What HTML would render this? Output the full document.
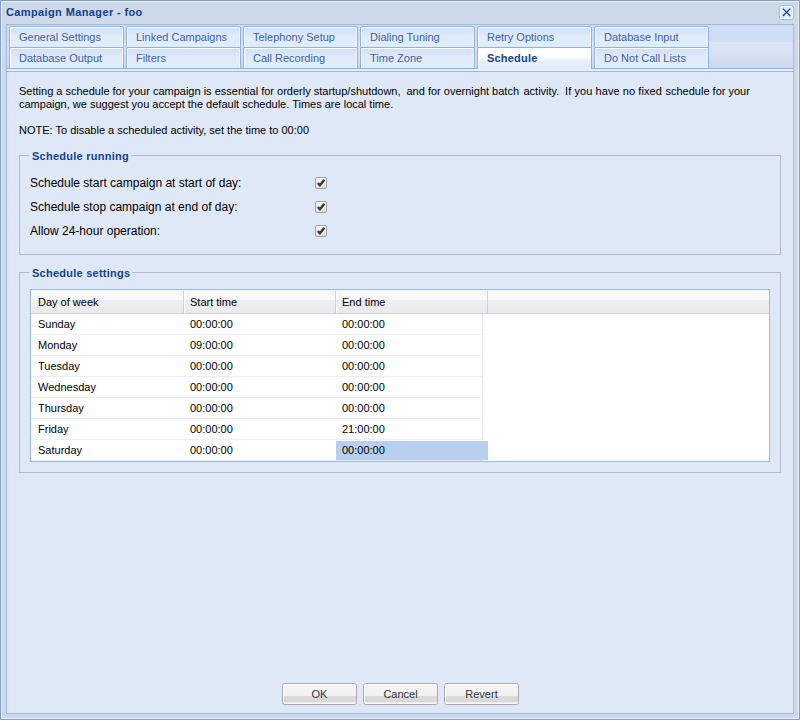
<!DOCTYPE html>
<html><head><meta charset="utf-8">
<style>
*{box-sizing:border-box;margin:0;padding:0}
html,body{width:800px;height:720px;overflow:hidden}
body{position:relative;background:#cdd9e8;font-family:"Liberation Sans",sans-serif;font-size:11px;color:#000}
.a{position:absolute}
.t{position:absolute;white-space:nowrap;line-height:13px;height:13px}
/* frame lines */
#fo{left:0;top:0;width:800px;height:720px;border:1px solid #86a0c4}
#fi{left:1px;top:1px;width:798px;height:718px;border:1px solid #e9eef6;border-right-color:#e9eef6}
#title{left:6px;top:6px;font-weight:bold;color:#15428b;letter-spacing:0.38px}
#close{left:779px;top:5px;width:15px;height:15px;border:1px solid #9ebde6;border-radius:3px;background:#fff}
#close i{position:absolute;left:1px;top:1px;width:11px;height:11px;background:#dcecfc;border-radius:1px}
#strip{left:6px;top:24px;width:788px;height:48px;border:1px solid #99bbe8;border-bottom:none;background:#cddef5}
#strip2{left:7px;top:42px;width:786px;height:26px;background:linear-gradient(#dfe7f5,#cbd9ef)}
#sline{left:7px;top:68px;width:786px;height:1px;background:#8db2e3}
#spacer{left:7px;top:69px;width:786px;height:2px;background:#e6effb}
#sline2{left:6px;top:71px;width:788px;height:1px;background:#99bbe8}
#body{left:6px;top:72px;width:788px;height:642px;border:1px solid #99bbe8;border-top:none;background:#dfe8f6}
.tab{position:absolute;width:115px;height:22px;border:1px solid #8db2e3;border-radius:2px 2px 0 0;background:linear-gradient(#cfdff6 0px,#e1ecfb 10px,#e1ecfb 100%);box-shadow:inset 1px 1px 0 #fff, inset -1px 0 0 #f4f8fe}
.tab span{position:absolute;left:9px;top:4px;line-height:13px;color:#3d629e;white-space:nowrap}
.tab.act{height:22px;border-bottom:none;background:linear-gradient(#fff 0px,#fdfeff 9px,#e8effa 13px,#e3ebf8 100%);box-shadow:inset 1px 1px 0 #fff}
.tab.act span{color:#15428b;font-weight:bold;letter-spacing:0.2px}
.p{left:19px;color:#000}
fieldset{position:absolute;border:1px solid #b5b8c8}
.lg{position:absolute;font-weight:bold;color:#15428b;background:#dfe8f6;padding:0 2px 0 3px;line-height:13px;white-space:nowrap;letter-spacing:0.25px}
.lbl{position:absolute;left:30px;font-size:12px;line-height:14px;white-space:nowrap}
.cb{position:absolute;left:315px;width:12px;height:12px;border:1px solid #a3a3a3;border-radius:2px;background:linear-gradient(#f4f4f4,#dedede)}
.cb svg{position:absolute;left:0;top:0}
#grid{left:30px;top:289px;width:740px;height:173px;border:1px solid #99bbe8;background:#fff}
#hd{left:0;top:0;width:738px;height:24px;box-shadow:inset 1px 0 0 #fbfbfb;background:linear-gradient(#f9f9f9 0,#f8f8f8 10px,#efeff1 10px,#e9eaec 23px);border-bottom:1px solid #d0d0d0}
.hsep{position:absolute;top:1px;width:1px;height:23px;background:#d0d0d0}
.hsep2{position:absolute;top:1px;width:1px;height:23px;background:#fff}
.hdt{position:absolute;top:6px;line-height:13px;white-space:nowrap;color:#000}
.row{position:absolute;left:0;width:452px;height:21px;border:1px solid #ededed;border-top-color:#fff;border-left:none}
.c{position:absolute;line-height:13px;white-space:nowrap;color:#000}
#sel{left:305px;top:151px;width:152px;height:19px;background:#b8cfee}
.btn{position:absolute;top:683px;width:75px;height:22px;border:1px solid #ababab;border-radius:2.5px;background:linear-gradient(#f5f5f5 0,#f1f1f1 60%,#dadada 60%,#d8d8d8 92%,#ececec 92%);box-shadow:inset 1px 1px 0 #fff,inset 0 -1px 0 #f8f8f8}
.btn span{position:absolute;left:0;right:0;top:4px;text-align:center;line-height:13px;color:#333}
</style></head>
<body>
<div id="fo" class="a"></div>
<div id="fi" class="a"></div>
<div id="title" class="t">Campaign Manager - foo</div>
<div id="close" class="a"><i></i>
<svg class="a" style="left:1px;top:1px" width="11" height="11" viewBox="0 0 11 11"><path d="M1.9 1.6L9.3 9.0M9.3 1.6L1.9 9.0" stroke="#1d3f88" stroke-width="1.3"/></svg>
</div>

<div id="strip" class="a"></div>
<div id="strip2" class="a"></div>
<div id="sline" class="a"></div>
<div id="spacer" class="a"></div>
<div id="sline2" class="a"></div>
<div id="body" class="a"></div>

<!-- tabs row 1 -->
<div class="tab" style="left:9px;top:26px"><span>General Settings</span></div>
<div class="tab" style="left:126px;top:26px"><span>Linked Campaigns</span></div>
<div class="tab" style="left:243px;top:26px"><span>Telephony Setup</span></div>
<div class="tab" style="left:360px;top:26px"><span>Dialing Tuning</span></div>
<div class="tab" style="left:477px;top:26px"><span>Retry Options</span></div>
<div class="tab" style="left:594px;top:26px"><span>Database Input</span></div>
<!-- tabs row 2 -->
<div class="tab" style="left:9px;top:47px"><span>Database Output</span></div>
<div class="tab" style="left:126px;top:47px"><span>Filters</span></div>
<div class="tab" style="left:243px;top:47px"><span>Call Recording</span></div>
<div class="tab" style="left:360px;top:47px"><span>Time Zone</span></div>
<div class="tab act" style="left:477px;top:47px"><span>Schedule</span></div>
<div class="tab" style="left:594px;top:47px"><span>Do Not Call Lists</span></div>

<div class="t p" style="top:85px">Setting a schedule for your campaign is essential for orderly startup/shutdown,</div><div class="t" style="left:406.5px;top:85px">and for overnight batch</div><div class="t" style="left:523.5px;top:85px">activity.</div><div class="t" style="left:565px;top:85px;letter-spacing:0.08px">If you have no fixed</div><div class="t" style="left:665.5px;top:85px">schedule for your</div>
<div class="t p" style="top:98px">campaign, we suggest you accept the default schedule. Times are local time.</div>
<div class="t p" style="top:124px">NOTE: To disable a scheduled activity, set the time to 00:00</div>

<div class="a" style="left:19px;top:155px;width:762px;height:100px;border:1px solid #b5b8c8"></div>
<div class="lg" style="left:29px;top:150px">Schedule running</div>
<div class="lbl" style="top:176px">Schedule start campaign at start of day:</div>
<div class="lbl" style="top:200px">Schedule stop campaign at end of day:</div>
<div class="lbl" style="top:224px">Allow 24-hour operation:</div>
<div class="cb" style="top:177px"><svg style="left:-1px;top:-1px" width="12" height="12" viewBox="0 0 12 12"><path d="M2.9 5.9L4.9 8.2L9.4 2.8" fill="none" stroke="#333" stroke-width="2.3"/></svg></div>
<div class="cb" style="top:201px"><svg style="left:-1px;top:-1px" width="12" height="12" viewBox="0 0 12 12"><path d="M2.9 5.9L4.9 8.2L9.4 2.8" fill="none" stroke="#333" stroke-width="2.3"/></svg></div>
<div class="cb" style="top:225px"><svg style="left:-1px;top:-1px" width="12" height="12" viewBox="0 0 12 12"><path d="M2.9 5.9L4.9 8.2L9.4 2.8" fill="none" stroke="#333" stroke-width="2.3"/></svg></div>

<div class="a" style="left:19px;top:272px;width:762px;height:201px;border:1px solid #b5b8c8"></div>
<div class="lg" style="left:29px;top:267px">Schedule settings</div>

<div id="grid" class="a">
  <div id="hd" class="a"></div>
  <div class="hsep" style="left:152px"></div><div class="hsep2" style="left:153px"></div>
  <div class="hsep" style="left:304px"></div><div class="hsep2" style="left:305px"></div>
  <div class="hsep" style="left:456px;height:22px"></div>
  <div class="hdt" style="left:7px">Day of week</div>
  <div class="hdt" style="left:159px">Start time</div>
  <div class="hdt" style="left:311px">End time</div>

  <div class="row" style="top:24px"></div>
  <div class="row" style="top:45px"></div>
  <div class="row" style="top:66px"></div>
  <div class="row" style="top:87px"></div>
  <div class="row" style="top:108px"></div>
  <div class="row" style="top:129px"></div>
  <div class="row" style="top:150px"></div>
  <div id="sel" class="a"></div>

  <div class="c" style="left:7px;top:28px">Sunday</div><div class="c" style="left:159px;top:28px">00:00:00</div><div class="c" style="left:311px;top:28px">00:00:00</div>
  <div class="c" style="left:7px;top:49px">Monday</div><div class="c" style="left:159px;top:49px">09:00:00</div><div class="c" style="left:311px;top:49px">00:00:00</div>
  <div class="c" style="left:7px;top:70px">Tuesday</div><div class="c" style="left:159px;top:70px">00:00:00</div><div class="c" style="left:311px;top:70px">00:00:00</div>
  <div class="c" style="left:7px;top:91px">Wednesday</div><div class="c" style="left:159px;top:91px">00:00:00</div><div class="c" style="left:311px;top:91px">00:00:00</div>
  <div class="c" style="left:7px;top:112px">Thursday</div><div class="c" style="left:159px;top:112px">00:00:00</div><div class="c" style="left:311px;top:112px">00:00:00</div>
  <div class="c" style="left:7px;top:133px">Friday</div><div class="c" style="left:159px;top:133px">00:00:00</div><div class="c" style="left:311px;top:133px">21:00:00</div>
  <div class="c" style="left:7px;top:154px">Saturday</div><div class="c" style="left:159px;top:154px">00:00:00</div><div class="c" style="left:311px;top:154px">00:00:00</div>
</div>

<div class="btn" style="left:282px"><span>OK</span></div>
<div class="btn" style="left:363px"><span>Cancel</span></div>
<div class="btn" style="left:444px"><span>Revert</span></div>
</body></html>
